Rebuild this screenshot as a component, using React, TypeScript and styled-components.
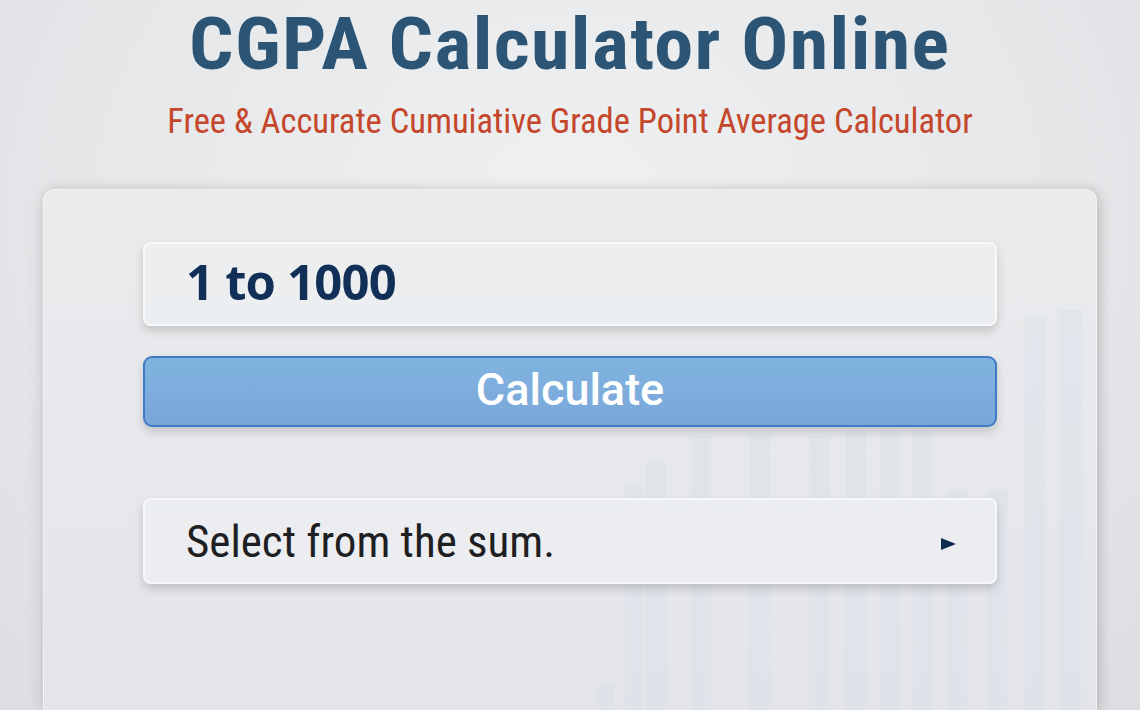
import React from 'react'
import styled, { createGlobalStyle } from 'styled-components'

const GlobalStyle = createGlobalStyle`
    html, body {
        margin: 0;
        padding: 0;
    }
    body {
        width: 1140px;
        height: 710px;
        overflow: hidden;
        background: radial-gradient(ellipse at 50% 30%, #eef0f2 0%, #e6e8ea 55%, #dcdee1 100%);
        font-family: Roboto, "Liberation Sans", sans-serif;
    }
`

const Page = styled.main`
    display: flex;
    flex-direction: column;
    align-items: center;
    height: 710px;
    padding-top: 8px;
    box-sizing: border-box;
`

const Title = styled.h1`
    margin: 0;
    font-family: "Roboto Condensed", "Liberation Sans Narrow", "Liberation Sans", sans-serif;
    font-weight: 700;
    font-size: 73px;
    line-height: 73px;
    color: #2c5475;
    letter-spacing: 1.3px;
    transform: scaleX(1.07);
`

const Subtitle = styled.p`
    margin: 23px 0 0;
    font-family: "Roboto Condensed", "Liberation Sans Narrow", "Liberation Sans", sans-serif;
    font-size: 34.5px;
    line-height: 34px;
    color: #c4472b;
`

const Card = styled.section`
    position: relative;
    margin-top: 51px;
    width: 1054px;
    flex: 1;
    box-sizing: border-box;
    padding: 52px 99px 0;
    border-radius: 12px 12px 0 0;
    background: linear-gradient(180deg, #e9ebed 0%, #e3e5e8 100%);
    border: 1px solid #f2f3f5;
    border-bottom: none;
    box-shadow: 0 4px 18px rgba(0, 0, 0, 0.12), 3px 0 10px rgba(0, 0, 0, 0.1);
    display: flex;
    flex-direction: column;
`

const Chart = styled.svg`
    position: absolute;
    left: 0;
    top: 0;
    width: 100%;
    height: 100%;
    pointer-events: none;
`

const Field = styled.div<{ height: number }>`
    position: relative;
    height: ${({ height }) => height}px;
    box-sizing: border-box;
    display: flex;
    align-items: center;
    justify-content: space-between;
    padding: 0 39px 0 41px;
    border-radius: 8px;
    background: rgba(236, 238, 240, 0.92);
    border: 2px solid #f7f8f9;
    box-shadow: 0 5px 10px rgba(0, 0, 0, 0.16);
`

const RangeText = styled.span`
    font-family: "Open Sans", "Noto Sans", sans-serif;
    font-weight: 700;
    font-size: 49px;
    line-height: 1;
    margin-top: -6px;
    color: #112f57;
    letter-spacing: -0.8px;
`

const CalcButton = styled.button`
    position: relative;
    margin-top: 30px;
    height: 71px;
    border-radius: 9px;
    border: 2px solid #3e7bc3;
    background: linear-gradient(180deg, #80b4e0 0%, #7aa6d9 100%);
    box-shadow: 0 5px 10px rgba(0, 0, 0, 0.15);
    color: #ffffff;
    font-family: Roboto, sans-serif;
    font-weight: 500;
    font-size: 45px;
    padding: 0 0 4px;
    cursor: pointer;
`

const SelectSpacer = styled.div`
    height: 71px;
`

const SelectText = styled.span`
    font-family: "Roboto Condensed", "Liberation Sans Narrow", "Liberation Sans", sans-serif;
    font-size: 45px;
    color: #1e1f22;
`

const Arrow = styled.span`
    width: 0;
    height: 0;
    margin-top: 6px;
    border-top: 6.5px solid transparent;
    border-bottom: 6.5px solid transparent;
    border-left: 15px solid #0d2a52;
`

const bars = [
    { x: 555, top: 495, w: 16 },
    { x: 582, top: 295, w: 18 },
    { x: 603, top: 272, w: 20 },
    { x: 648, top: 246, w: 20 },
    { x: 707, top: 243, w: 20 },
    { x: 767, top: 246, w: 20 },
    { x: 803, top: 240, w: 20 },
    { x: 837, top: 240, w: 20 },
    { x: 870, top: 240, w: 20 },
    { x: 905, top: 300, w: 20 },
    { x: 945, top: 300, w: 20 },
    { x: 982, top: 127, w: 21 },
    { x: 1017, top: 120, w: 22 },
]

const App = () => {
    return (
        <>
            <GlobalStyle />
            <Page>
                <Title>CGPA Calculator Online</Title>
                <Subtitle>Free &amp; Accurate Cumuiative Grade Point Average Calculator</Subtitle>
                <Card>
                    <Chart viewBox="0 0 1054 520" preserveAspectRatio="none">
                        {bars.map((b, i) => (
                            <rect key={i} x={b.x} y={b.top} width={b.w} height={520 - b.top} fill="#d6e2ec" opacity="0.4" />
                        ))}
                    </Chart>
                    <Field height={84}>
                        <RangeText>1 to 1000</RangeText>
                    </Field>
                    <CalcButton>Calculate</CalcButton>
                    <SelectSpacer />
                    <Field height={86}>
                        <SelectText>Select from the sum.</SelectText>
                        <Arrow />
                    </Field>
                </Card>
            </Page>
        </>
    )
}

export default App
